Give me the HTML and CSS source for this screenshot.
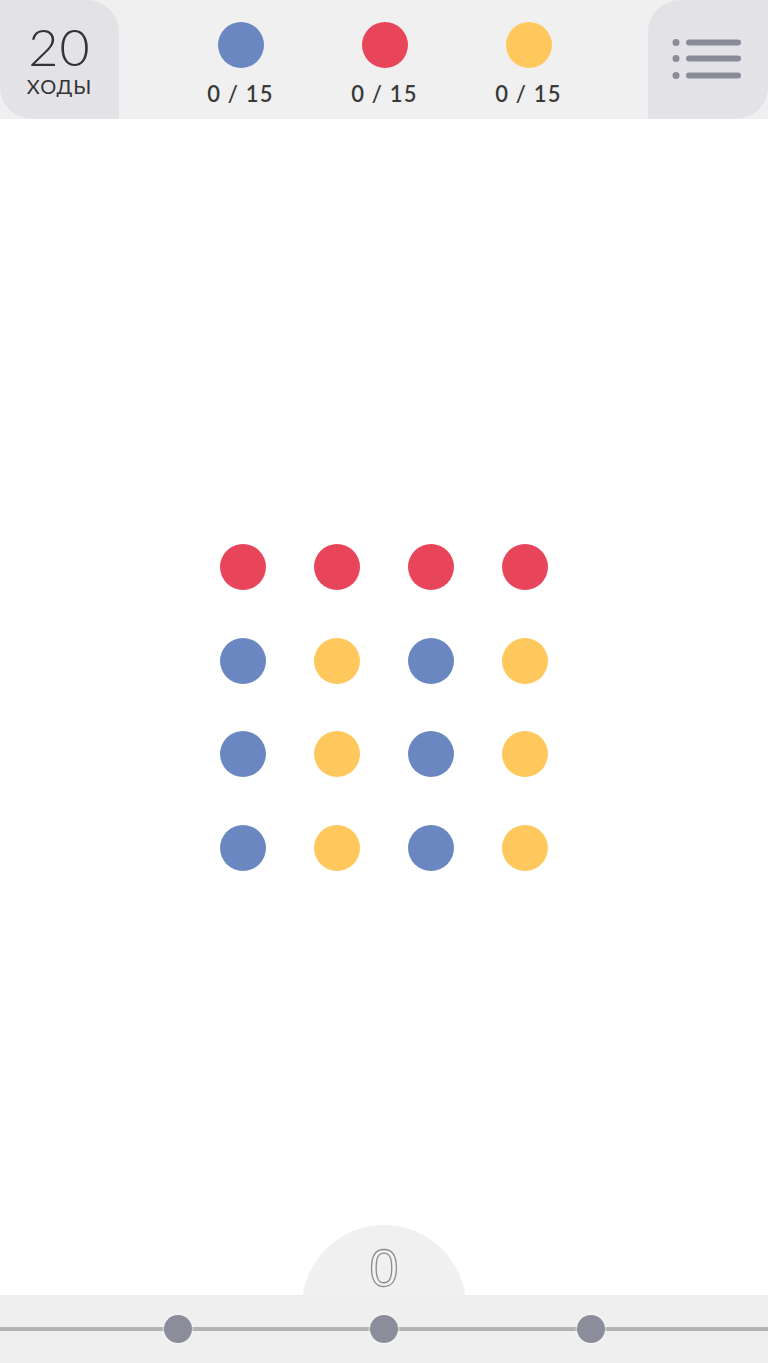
FILE: index.html
```html
<!DOCTYPE html>
<html lang="ru">
<head>
<meta charset="utf-8">
<title>Two Dots</title>
<link rel="stylesheet" href="styles.css">
</head>
<body>
<div class="screen">
  <header class="topbar">
    <div class="moves">
      <div class="moves-num">20</div>
      <div class="moves-label">ХОДЫ</div>
    </div>
    <div class="goals">
      <div class="goal">
        <span class="dot blue"></span>
        <span class="goal-text">0 / 15</span>
      </div>
      <div class="goal">
        <span class="dot red"></span>
        <span class="goal-text">0 / 15</span>
      </div>
      <div class="goal">
        <span class="dot yellow"></span>
        <span class="goal-text">0 / 15</span>
      </div>
    </div>
    <div class="menu">
      <svg class="menu-icon" width="70" height="40" viewBox="0 0 70 40">
        <circle cx="4" cy="3.5" r="3.5" fill="#898c97"/>
        <circle cx="4" cy="19.5" r="3.5" fill="#898c97"/>
        <circle cx="4" cy="36.5" r="3.5" fill="#898c97"/>
        <rect x="14" y="0.5" width="55" height="6" rx="3" fill="#898c97"/>
        <rect x="14" y="16.5" width="55" height="6" rx="3" fill="#898c97"/>
        <rect x="14" y="33.5" width="55" height="6" rx="3" fill="#898c97"/>
      </svg>
    </div>
  </header>

  <main class="board-area">
    <div class="board">
      <span class="dot red"></span><span class="dot red"></span><span class="dot red"></span><span class="dot red"></span>
      <span class="dot blue"></span><span class="dot yellow"></span><span class="dot blue"></span><span class="dot yellow"></span>
      <span class="dot blue"></span><span class="dot yellow"></span><span class="dot blue"></span><span class="dot yellow"></span>
      <span class="dot blue"></span><span class="dot yellow"></span><span class="dot blue"></span><span class="dot yellow"></span>
    </div>
  </main>

  <footer class="footer">
    <div class="bump"><span class="score">0</span></div>
    <div class="bar">
      <div class="track"></div>
      <div class="stars">
        <span class="star"></span>
        <span class="star"></span>
        <span class="star"></span>
      </div>
    </div>
  </footer>
</div>
</body>
</html>
```

FILE: styles.css
```css
html, body {
  margin: 0;
  padding: 0;
  background: #ffffff;
}

.screen {
  width: 768px;
  height: 1363px;
  display: flex;
  flex-direction: column;
  overflow: hidden;
  font-family: "Lato", "Liberation Sans", sans-serif;
  color: #3a3a3c;
}

/* Top bar */
.topbar {
  height: 119px;
  flex: 0 0 119px;
  display: flex;
  background: #f0f0f0;
}

.moves {
  width: 119px;
  flex: 0 0 119px;
  background: #e3e3e7;
  border-radius: 0 32px 0 32px;
  display: flex;
  flex-direction: column;
  align-items: center;
  padding-top: 26px;
  box-sizing: border-box;
}

.moves-num {
  font-size: 52px;
  font-weight: 300;
  line-height: 40px;
  letter-spacing: 1px;
  color: #333335;
}

.moves-label {
  font-size: 20px;
  font-weight: 400;
  line-height: 20px;
  letter-spacing: 1px;
  margin-top: 10px;
  color: #333335;
}

.goals {
  flex: 1;
  display: flex;
  justify-content: center;
  padding-left: 2px;
}

.goal {
  width: 144px;
  display: flex;
  flex-direction: column;
  align-items: center;
  padding-top: 22px;
}

.goal .dot {
  width: 46px;
  height: 46px;
}

.goal-text {
  margin-top: 15px;
  font-size: 22px;
  line-height: 22px;
  font-weight: 600;
  letter-spacing: 1.2px;
  color: #3a3a3c;
}

.menu {
  width: 120px;
  flex: 0 0 120px;
  background: #e3e3e7;
  border-radius: 32px 0 32px 0;
  display: flex;
  justify-content: flex-start;
  padding: 39px 0 0 24px;
  box-sizing: border-box;
}

.menu-icon {
  display: block;
}

/* Dots */
.dot {
  display: block;
  border-radius: 50%;
  width: 46px;
  height: 46px;
}

.blue { background: #6a87c1; }
.red { background: #e9455a; }
.yellow { background: #fec85d; }

/* Board */
.board-area {
  flex: 1;
  display: flex;
  justify-content: center;
  padding-top: 425px;
}

.board {
  display: grid;
  grid-template-columns: repeat(4, 46px);
  grid-auto-rows: 46px;
  gap: 47.7px;
  align-content: start;
}

/* Footer */
.footer {
  position: relative;
  height: 138px;
  flex: 0 0 138px;
  display: flex;
  flex-direction: column;
  justify-content: flex-end;
}

.bump {
  position: absolute;
  top: 0;
  left: 302px;
  width: 164px;
  height: 164px;
  border-radius: 50%;
  background: #f0f0f0;
  display: flex;
  justify-content: center;
}

.score {
  margin-top: 18px;
  font-size: 52px;
  line-height: 50px;
  font-weight: 300;
  color: #f3f3f3;
  -webkit-text-stroke: 1.3px #8c8c8c;
  font-family: "Liberation Sans", sans-serif;
}

.bar {
  position: relative;
  height: 68px;
  background: #efefef;
  padding-top: 32px;
  box-sizing: border-box;
}

.track {
  height: 4px;
  background: #b3b3b3;
}

.stars {
  display: flex;
  justify-content: center;
  gap: 178.5px;
  margin-top: -16px;
}

.star {
  width: 28px;
  height: 28px;
  border-radius: 50%;
  background: #8b8e9a;
  box-shadow: 0 0 0 1.5px rgba(255, 255, 255, 0.35);
}
```
